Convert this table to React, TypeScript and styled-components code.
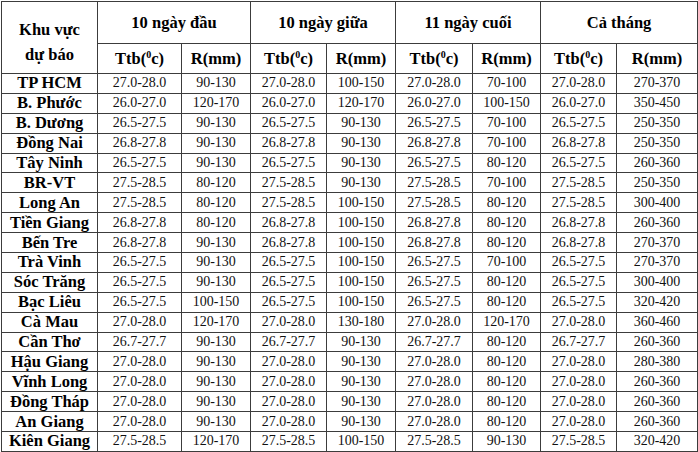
import styled, { createGlobalStyle } from "styled-components";

const GlobalStyle = createGlobalStyle`
  html, body {
    margin: 0;
    padding: 0;
    background: #ffffff;
  }
  body {
    font-family: "Liberation Serif", "Times New Roman", serif;
    color: #000000;
  }
`;

type Row = [string, string, string, string, string, string, string, string, string];

// region, then Ttb / R pairs for each period
const rows: Row[] = [
  ["TP HCM", "27.0-28.0", "90-130", "27.0-28.0", "100-150", "27.0-28.0", "70-100", "27.0-28.0", "270-370"],
  ["B. Phước", "26.0-27.0", "120-170", "26.0-27.0", "120-170", "26.0-27.0", "100-150", "26.0-27.0", "350-450"],
  ["B. Dương", "26.5-27.5", "90-130", "26.5-27.5", "90-130", "26.5-27.5", "70-100", "26.5-27.5", "250-350"],
  ["Đồng Nai", "26.8-27.8", "90-130", "26.8-27.8", "90-130", "26.8-27.8", "70-100", "26.8-27.8", "250-350"],
  ["Tây Ninh", "26.5-27.5", "90-130", "26.5-27.5", "90-130", "26.5-27.5", "80-120", "26.5-27.5", "260-360"],
  ["BR-VT", "27.5-28.5", "80-120", "27.5-28.5", "90-130", "27.5-28.5", "70-100", "27.5-28.5", "250-350"],
  ["Long An", "27.5-28.5", "80-120", "27.5-28.5", "100-150", "27.5-28.5", "80-120", "27.5-28.5", "300-400"],
  ["Tiền Giang", "26.8-27.8", "80-120", "26.8-27.8", "100-150", "26.8-27.8", "80-120", "26.8-27.8", "260-360"],
  ["Bến Tre", "26.8-27.8", "90-130", "26.8-27.8", "100-150", "26.8-27.8", "80-120", "26.8-27.8", "270-370"],
  ["Trà Vinh", "26.5-27.5", "90-130", "26.5-27.5", "100-150", "26.5-27.5", "70-100", "26.5-27.5", "270-370"],
  ["Sóc Trăng", "26.5-27.5", "90-130", "26.5-27.5", "100-150", "26.5-27.5", "80-120", "26.5-27.5", "300-400"],
  ["Bạc Liêu", "26.5-27.5", "100-150", "26.5-27.5", "100-150", "26.5-27.5", "80-120", "26.5-27.5", "320-420"],
  ["Cà Mau", "27.0-28.0", "120-170", "27.0-28.0", "130-180", "27.0-28.0", "120-170", "27.0-28.0", "360-460"],
  ["Cần Thơ", "26.7-27.7", "90-130", "26.7-27.7", "90-130", "26.7-27.7", "80-120", "26.7-27.7", "260-360"],
  ["Hậu Giang", "27.0-28.0", "90-130", "27.0-28.0", "90-130", "27.0-28.0", "80-120", "27.0-28.0", "280-380"],
  ["Vĩnh Long", "27.0-28.0", "90-130", "27.0-28.0", "90-130", "27.0-28.0", "80-120", "27.0-28.0", "260-360"],
  ["Đồng Tháp", "27.0-28.0", "90-130", "27.0-28.0", "90-130", "27.0-28.0", "80-120", "27.0-28.0", "260-360"],
  ["An Giang", "27.0-28.0", "90-130", "27.0-28.0", "90-130", "27.0-28.0", "80-120", "27.0-28.0", "260-360"],
  ["Kiên Giang", "27.5-28.5", "120-170", "27.5-28.5", "100-150", "27.5-28.5", "90-130", "27.5-28.5", "320-420"],
];

const periods = ["10 ngày đầu", "10 ngày giữa", "11 ngày cuối", "Cả tháng"];
const colWidths = [96, 84, 69, 76, 69, 77, 68, 76, 81];

const Wrapper = styled.div`
  padding: 1px 0 0 1px;
`;

const Table = styled.table`
  width: 696px;
  table-layout: fixed;
  border-collapse: collapse;
  border: 1px solid #3c3c3c;
`;

const HeadCell = styled.th<{ $height?: number; $offset?: number }>`
  border: 1px solid #3c3c3c;
  height: ${(p) => (p.$height ? `${p.$height}px` : "auto")};
  padding: ${(p) => p.$offset ?? 0}px 0 0;
  font-size: 16.5px;
  font-weight: bold;
  text-align: center;
  vertical-align: middle;
  line-height: 25px;
`;

const Sup = styled.sup`
  font-size: 10px;
  vertical-align: 6px;
  line-height: 0;
`;

const DataRow = styled.tr`
  height: 19.9px;
`;

const NameCell = styled.td`
  border: 1px solid #3c3c3c;
  padding: 0;
  font-size: 16.5px;
  font-weight: bold;
  text-align: center;
  line-height: 18px;
  white-space: nowrap;
`;

const ValueCell = styled.td`
  border: 1px solid #3c3c3c;
  padding: 0;
  font-size: 14px;
  text-align: center;
  line-height: 18px;
  color: #111111;
  white-space: nowrap;
`;

export default function App() {
  return (
    <Wrapper>
      <GlobalStyle />
      <Table>
        <colgroup>
          {colWidths.map((w, i) => (
            <col key={i} style={{ width: w }} />
          ))}
        </colgroup>
        <thead>
          <tr>
            <HeadCell rowSpan={2} $offset={8}>
              Khu vực
              <br />
              dự báo
            </HeadCell>
            {periods.map((p) => (
              <HeadCell key={p} colSpan={2} $height={41}>
                {p}
              </HeadCell>
            ))}
          </tr>
          <tr>
            {periods.map((p) => [
              <HeadCell key={p + "t"} $height={29}>
                Ttb(<Sup>0</Sup>c)
              </HeadCell>,
              <HeadCell key={p + "r"} $height={29}>
                R(mm)
              </HeadCell>,
            ])}
          </tr>
        </thead>
        <tbody>
          {rows.map((r) => (
            <DataRow key={r[0]}>
              <NameCell>{r[0]}</NameCell>
              {r.slice(1).map((v, i) => (
                <ValueCell key={i}>{v}</ValueCell>
              ))}
            </DataRow>
          ))}
        </tbody>
      </Table>
    </Wrapper>
  );
}
